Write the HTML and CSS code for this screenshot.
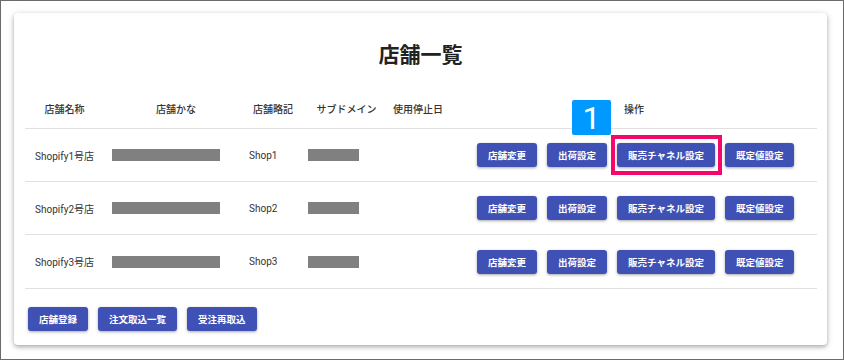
FILE: index.html
```html
<!DOCTYPE html>
<html lang="ja">
<head>
<meta charset="UTF-8">
<title>店舗一覧</title>
<link rel="stylesheet" href="styles.css">
</head>
<body>
<div class="frame">
  <div class="card">
    <h1 class="title">店舗一覧</h1>
    <div class="shop-table">
      <div class="row head">
        <div class="c1">店舗名称</div>
        <div class="c2">店舗かな</div>
        <div class="c3">店舗略記</div>
        <div class="c4">サブドメイン</div>
        <div class="c5">使用停止日</div>
        <div class="c6">操作</div>
      </div>
      <div class="row">
        <div class="c1">Shopify1号店</div>
        <div class="c2"><span class="mask wide"></span></div>
        <div class="c3">Shop1</div>
        <div class="c4"><span class="mask narrow"></span></div>
        <div class="c5"></div>
        <div class="c6 ops">
          <button class="btn">店舗変更</button>
          <button class="btn">出荷設定</button>
          <button class="btn">販売チャネル設定</button>
          <button class="btn">既定値設定</button>
        </div>
      </div>
      <div class="row">
        <div class="c1">Shopify2号店</div>
        <div class="c2"><span class="mask wide"></span></div>
        <div class="c3">Shop2</div>
        <div class="c4"><span class="mask narrow"></span></div>
        <div class="c5"></div>
        <div class="c6 ops">
          <button class="btn">店舗変更</button>
          <button class="btn">出荷設定</button>
          <button class="btn">販売チャネル設定</button>
          <button class="btn">既定値設定</button>
        </div>
      </div>
      <div class="row">
        <div class="c1">Shopify3号店</div>
        <div class="c2"><span class="mask wide"></span></div>
        <div class="c3">Shop3</div>
        <div class="c4"><span class="mask narrow"></span></div>
        <div class="c5"></div>
        <div class="c6 ops">
          <button class="btn">店舗変更</button>
          <button class="btn">出荷設定</button>
          <button class="btn">販売チャネル設定</button>
          <button class="btn">既定値設定</button>
        </div>
      </div>
    </div>
    <div class="bottom-bar">
      <button class="btn">店舗登録</button>
      <button class="btn">注文取込一覧</button>
      <button class="btn">受注再取込</button>
    </div>
    <!-- 注釈 -->
    <div class="badge">1</div>
    <div class="highlight"></div>
  </div>
</div>
</body>
</html>
```

FILE: styles.css
```css
body {
    margin: 0;
    background: #fff;
    font-family: Roboto, "Noto Sans CJK JP", sans-serif;
    color: #333;
}
.frame {
    width: 844px;
    height: 360px;
    box-sizing: border-box;
    border: 1px solid #6b6b6b;
    padding: 12px 16px 0 13px;
    background: #fff;
}
.card {
    position: relative;
    background: #fff;
    border-radius: 4px;
    padding: 0 14px 14px 14px;
    box-shadow: 0 2px 4px rgba(0,0,0,0.28), 0 1px 8px rgba(0,0,0,0.1);
}
.title {
    margin: 0 0 18px 0;
    padding-top: 27px;
    line-height: 30px;
    font-size: 21px;
    font-weight: 700;
    text-align: center;
    color: #222;
}
.shop-table {
    margin: 0 -4px 0 -3px;
}
.row {
    display: grid;
    grid-template-columns: 79px 136px 57px 88px 66px 1fr;
    align-items: center;
    height: 52px;
    border-bottom: 1px solid #e0e0e0;
    font-size: 10px;
}
.row:last-child { height: 53px; }
.row.head {
    height: 40px;
    font-weight: 500;
}
.row.head > div { text-align: center; }
.c1 { text-align: center; }
.c2 { padding-left: 8px; }
.c3 { padding-left: 9px; }
.c4 { padding-left: 11px; }
.mask {
    display: block;
    height: 12px;
    background: #808080;
}
.mask.wide { width: 108px; }
.mask.narrow { width: 51px; }
.ops {
    display: flex;
    gap: 10px;
    padding-left: 26px;
}
.btn {
    height: 24px;
    padding: 0 11px;
    border: none;
    border-radius: 3px;
    background: #3f51b5;
    color: #fff;
    font-family: Roboto, "Noto Sans CJK JP", sans-serif;
    font-size: 9.5px;
    font-weight: 700;
    white-space: nowrap;
    box-shadow: 0 1px 3px rgba(0,0,0,0.35);
    cursor: pointer;
}
.bottom-bar {
    display: flex;
    gap: 10px;
    margin-top: 18px;
}
.badge {
    position: absolute;
    left: 558px;
    top: 87px;
    width: 39px;
    height: 35px;
    border-radius: 2px;
    background: #0099ff;
    color: #fff;
    font-family: Roboto, sans-serif;
    font-size: 32px;
    line-height: 36px;
    text-align: center;
}
.highlight {
    position: absolute;
    left: 597px;
    top: 122px;
    width: 111px;
    height: 40px;
    box-sizing: border-box;
    border: 4px solid #f5086c;
}
```
